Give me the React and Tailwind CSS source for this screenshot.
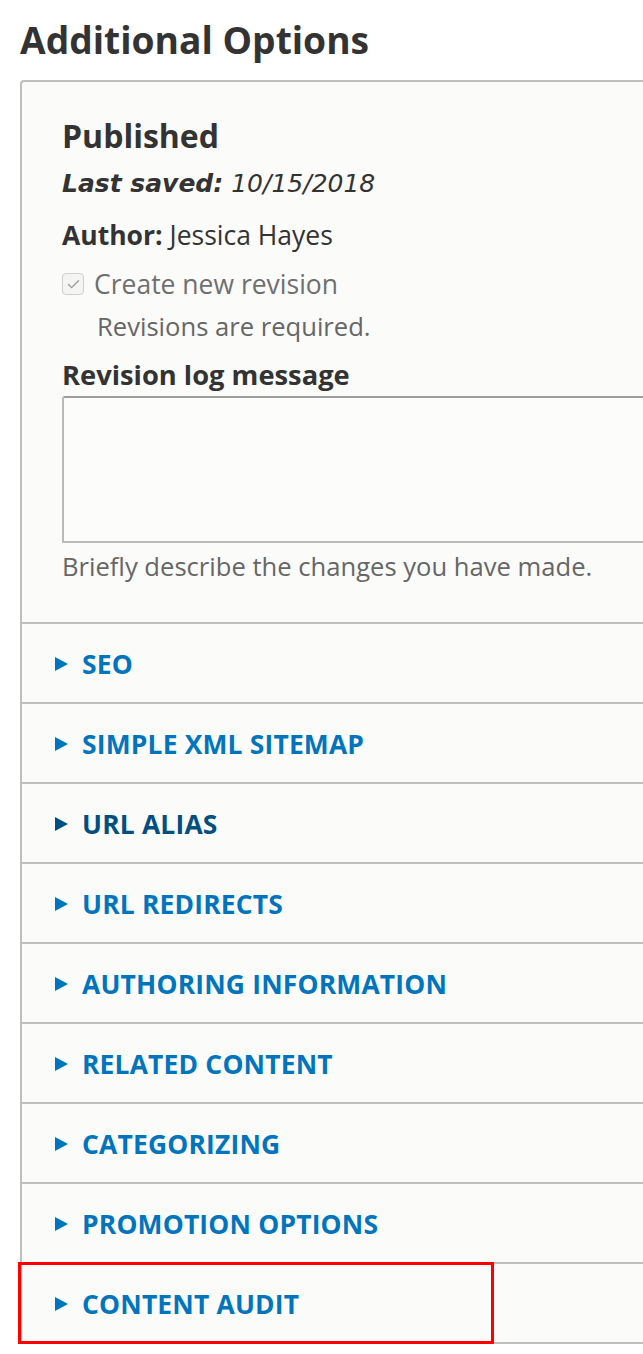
import { Check } from "lucide-react";

const sections = [
    { label: "SEO" },
    { label: "SIMPLE XML SITEMAP" },
    { label: "URL ALIAS", active: true },
    { label: "URL REDIRECTS" },
    { label: "AUTHORING INFORMATION" },
    { label: "RELATED CONTENT" },
    { label: "CATEGORIZING" },
    { label: "PROMOTION OPTIONS" },
    { label: "CONTENT AUDIT", highlighted: true },
];

const Arrow = ({ className }) => (
    <svg width="13" height="16" viewBox="0 0 13 16" className={className}>
        <polygon points="0,1 13,8 0,15" fill="currentColor" />
    </svg>
);

const SectionRow = ({ label, active, highlighted }) => (
    <div className="relative border-t-2 border-[#bfbfbf] h-[80px] flex items-center pl-[33px] pt-[3px]">
        <div
            className={`flex items-center gap-[14px] text-[26.4px] font-bold tracking-[0.2px] ${
                active ? "text-[#004f80]" : "text-[#0074bd]"
            }`}
        >
            <Arrow className="shrink-0" />
            <span>{label}</span>
        </div>
        {/* annotation box */}
        {highlighted && (
            <div className="absolute left-[-4px] top-[-2px] w-[476px] h-[82px] border-[3px] border-[#ff0000] pointer-events-none" />
        )}
    </div>
);

const App = () => {
    return (
        <div className="w-full min-h-[1354px] bg-white overflow-hidden font-['Open_Sans',sans-serif] text-[#333]">
            <h2 className="pl-5 pt-[14px] text-[37.2px] leading-[52px] font-bold text-[#333]">Additional Options</h2>

            <div className="mt-[14px] ml-5 w-[720px] border-l-2 border-t-2 border-[#bfbfbf] rounded-tl-[4px] bg-[#fbfbfa]">
                <div className="pl-10 pt-[36px] pb-[41px]">
                    <div className="text-[32px] leading-[36px] font-bold">Published</div>
                    <div className="mt-[15px] text-[25px] leading-[30px] italic font-['DejaVu_Sans',sans-serif]">
                        <span className="font-bold">Last saved:</span> 10/15/2018
                    </div>
                    <div className="mt-[21px] text-[26.5px] leading-[30px]">
                        <span className="font-bold">Author:</span> Jessica Hayes
                    </div>
                    <div className="mt-[19px] h-[30px] flex items-center gap-[10px]">
                        <div className="w-[22px] h-[22px] rounded-[4px] border border-[#cfcfcf] bg-[#f4f4f3] flex items-center justify-center">
                            <Check size={15} strokeWidth={2.2} className="text-[#9a9a9a]" />
                        </div>
                        <span className="text-[26.5px] leading-[30px] text-[#6f6f6f]">Create new revision</span>
                    </div>
                    <div className="mt-[14px] pl-[35px] text-[25.6px] leading-[28px] text-[#666]">Revisions are required.</div>
                    <div className="mt-[19px] text-[27.3px] leading-[30px] font-bold">Revision log message</div>
                    <div className="mt-[6px] h-[147px] border-2 border-[#bababa] border-t-[#9e9e9e] rounded-tl-[3px] bg-[#fcfcfb]" />
                    <div className="mt-[10px] text-[25.6px] leading-[28px] text-[#666]">
                        Briefly describe the changes you have made.
                    </div>
                </div>

                {sections.map((s) => (
                    <SectionRow key={s.label} {...s} />
                ))}
                <div className="border-t-2 border-[#bfbfbf]" />
            </div>
        </div>
    );
};

export default App;
